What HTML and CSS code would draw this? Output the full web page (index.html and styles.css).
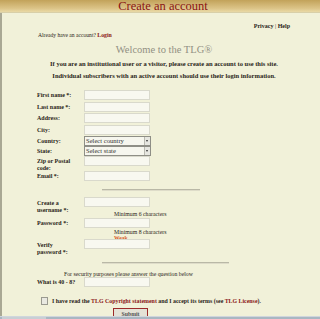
FILE: index.html
```html
<!DOCTYPE html>
<html>
<head>
<meta charset="utf-8">
<link rel="stylesheet" href="styles.css">
</head>
<body>
<div class="header"><h1 class="title">Create an account</h1></div>
<div class="page">
  <div class="toplinks"><b>Privacy</b> | <b>Help</b></div>
  <div class="already">Already have an account? <a class="red" href="#">Login</a></div>
  <h2 class="welcome">Welcome to the TLG®</h2>
  <p class="intro i1">If you are an institutional user or a visitor, please create an account to use this site.</p>
  <p class="intro i2">Individual subscribers with an active account should use their login information.</p>
  <form class="form">
    <div class="row r1"><label>First name *:</label><span class="inp"></span></div>
    <div class="row r2"><label>Last name *:</label><span class="inp"></span></div>
    <div class="row r3"><label>Address:</label><span class="inp"></span></div>
    <div class="row r4"><label>City:</label><span class="inp"></span></div>
    <div class="row r5"><label>Country:</label><span class="sel">Select country<i class="arr"></i></span></div>
    <div class="row r6"><label>State:</label><span class="sel">Select state<i class="arr"></i></span></div>
    <div class="row r7"><label>Zip or Postal code:</label><span class="inp"></span></div>
    <div class="row r8"><label>Email *:</label><span class="inp"></span></div>
    <div class="rule rule1"></div>
    <div class="row r9"><label>Create a username *:</label><span class="inp"></span></div>
    <div class="hint h1">Minimum 6 characters</div>
    <div class="row r10"><label>Password *:</label><span class="inp"></span></div>
    <div class="hint h2">Minimum 8 characters</div>
    <div class="weak">Weak</div>
    <div class="row r11"><label>Verify password *:</label><span class="inp"></span></div>
    <div class="rule rule2"></div>
    <div class="security">For security purposes please answer the question below</div>
    <div class="row r12"><label class="wide">What is 40 - 8?</label><span class="inp"></span></div>
    <div class="agree"><span class="cb"></span><span>I have read the <a class="red" href="#">TLG Copyright statement</a> and I accept its terms (see <a class="red" href="#">TLG License</a>).</span></div>
    <div class="submitrow"><span class="submit">Submit</span></div>
  </form>
</div>
<div class="taskbar"><span class="tb1"></span></div>
</body>
</html>
```
FILE: styles.css
```css
html, body { margin: 0; padding: 0; }
body {
  width: 320px;
  height: 319px;
  overflow: hidden;
  background: #f1f1d9;
  font-family: "Liberation Serif", serif;
  color: #2a2418;
  position: relative;
}
.header {
  height: 12px;
  background: linear-gradient(#c2a25a, #dcc488 70%, #e9d9a6);
  border-bottom: 1px solid #d8cfa8;
}
.title {
  margin: 0;
  font-weight: normal;
  font-size: 12.5px;
  line-height: 12px;
  color: #8a1414;
  text-align: center;
  padding-left: 6px;
}
.page {
  border-left: 2px solid #a9a894;
  height: 306px;
  position: relative;
}
.toplinks {
  text-align: right;
  padding-right: 30px;
  font-size: 6px;
  line-height: 6px;
  padding-top: 10px;
}
.already {
  font-size: 5.6px;
  line-height: 6px;
  padding-left: 36px;
  margin-top: 3px;
}
.already .red { font-size: 5.8px; font-weight: bold; }
.red { color: #8a1414; text-decoration: none; font-weight: bold; }
.welcome {
  margin: 6px 0 0;
  font-weight: normal;
  font-size: 10.5px;
  line-height: 12px;
  color: #929083;
  text-align: center;
  padding-left: 6px;
}
.intro {
  margin: 0;
  font-weight: bold;
  font-size: 6.5px;
  line-height: 6px;
  text-align: center;
  padding-left: 6px;
}
.i1 { margin-top: 5px; }
.i2 { margin-top: 6px; }
.form {
  margin: 11px 0 0 35px;
  font-size: 6px;
  line-height: 6px;
}
.row {
  display: flex;
  align-items: flex-start;
  height: 11px;
}
.row label {
  width: 38px;
  margin-right: 9px;
  font-weight: bold;
  padding-top: 2px;
  flex: none;
}
.row label.wide { white-space: nowrap; }
.inp {
  width: 64px;
  height: 8px;
  background: #f8f8f0;
  border: 1px solid #d9d9cc;
  display: block;
}
.sel {
  position: relative;
  height: 8px;
  border: 1px solid #8e8e86;
  background: #f6f6ee;
  font-size: 6.6px;
  line-height: 8px;
  color: #333;
  padding-left: 1px;
  width: 64px;
}
.arr {
  position: absolute;
  right: 0;
  top: 0;
  width: 5px;
  height: 8px;
  border-left: 1px solid #b8b8b0;
  background: #e6e6e0;
}
.arr::after {
  content: "";
  position: absolute;
  left: 1px;
  top: 3px;
  border-left: 1.5px solid transparent;
  border-right: 1.5px solid transparent;
  border-top: 2px solid #333;
}
.r1 { height: 12px; }
.r2 { height: 11px; }
.r3 { height: 12px; }
.r4 { height: 11px; }
.r5 { height: 10px; }
.r6 { height: 10px; }
.r7 { height: 15px; }
.r7 label { padding-top: 2px; line-height: 7px; }
.r9 label, .r11 label { padding-top: 3px; line-height: 7px; }
.r8 { height: 11px; }
.rule {
  height: 1px;
  background: #b9b8a6;
  border-bottom: 1px solid #dedcc9;
  margin-left: 65px;
}
.rule1 { width: 98px; margin-top: 7px; }
.rule2 { width: 127px; margin-top: 8px; }
.r9 { margin-top: 6px; height: 14px; }
.hint {
  font-size: 5.8px;
  line-height: 6px;
  margin-left: 77px;
}
.h1 { margin-top: 0; }
.r10 { height: 11px; margin-top: 1px; }
.h2 { margin-top: 0; }
.weak {
  color: #d8612a;
  font-weight: bold;
  font-size: 5.6px;
  line-height: 6px;
  margin-left: 77px;
}
.r11 { margin-top: -2px; height: 15px; }
.security {
  font-size: 5.8px;
  line-height: 6px;
  margin: 7px 0 0 27px;
}
.r12 { height: 12px; margin-top: 0; }
.r12 label { padding-top: 2px; }
.agree {
  display: flex;
  align-items: center;
  gap: 4px;
  margin: 8px 0 0 4px;
  font-weight: bold;
  font-size: 5.9px;
  line-height: 8px;
}
.cb {
  width: 5px;
  height: 6px;
  border: 1px solid #9a9a90;
  background: #e9e9e1;
  flex: none;
}
.submitrow { margin: 3px 0 0 76px; }
.submit {
  display: inline-block;
  width: 33px;
  height: 8px;
  border: 1px solid #9c2a2a;
  background: #e4e2d6;
  font-size: 5.8px;
  line-height: 10px;
  text-align: center;
  color: #555;
  font-weight: bold;
}
.taskbar {
  position: absolute;
  left: 0;
  right: 0;
  bottom: 0;
  height: 2px;
  background: #a9b7c2;
  border-top: 1px solid #d0d6dc;
}
.tb1 {
  display: block;
  width: 44px;
  height: 2px;
  background: #c8cfd4;
  margin-left: 2px;
}
```
